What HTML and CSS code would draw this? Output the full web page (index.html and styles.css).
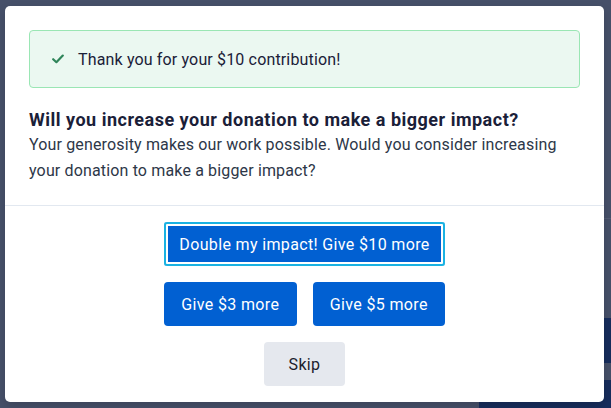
FILE: index.html
```html
<!DOCTYPE html>
<html>
	<head>
		<title>Increase your donation</title>
		<meta charset="UTF-8">
		<link rel="stylesheet" href="styles.css">
	</head>
	<body>
		<div class="page-behind">
			<div class="behind-line"></div>
			<div class="behind-block block-one"></div>
			<div class="behind-block block-two"></div>
			<div class="behind-block block-three"></div>
		</div>

		<div class="modal">
			<div class="modal-body">
				<div class="alert">
					<svg class="alert-icon" width="12" height="10" viewBox="0 0 12 10">
						<path d="M1.2 5.2 L4.4 8.2 L10.8 1.6" fill="none" stroke="#2f855a" stroke-width="2.2" stroke-linecap="round" stroke-linejoin="round"/>
					</svg>
					<span>Thank you for your $10 contribution!</span>
				</div>
				<h2 class="title">Will you increase your donation to make a bigger impact?</h2>
				<p class="text">Your generosity makes our work possible. Would you consider increasing your donation to make a bigger impact?</p>
			</div>
			<div class="modal-footer">
				<div class="choices">
					<button class="btn btn-primary btn-focus">Double my impact! Give $10 more</button>
					<div class="choices-row">
						<button class="btn btn-primary">Give $3 more</button>
						<button class="btn btn-primary">Give $5 more</button>
					</div>
					<button class="btn btn-skip">Skip</button>
				</div>
			</div>
		</div>
	</body>
</html>
```

FILE: styles.css
```css
html, body
	{
		margin: 0;
		height: 100%;
	}
body
	{
		background-color: #465069;
		font-family: Roboto, "Liberation Sans", sans-serif;
		color: #1a202c;
		letter-spacing: 0.15px;
		overflow: hidden;
		position: relative;
	}

/* page that lies under the overlay */
.behind-line
	{
		position: absolute;
		left: 560px;
		right: 0;
		top: 218px;
		height: 1px;
		background-color: #535c74;
	}
.behind-block
	{
		position: absolute;
		background-color: #172d5c;
	}
.block-one
	{
		left: 560px;
		right: 0;
		top: 318px;
		height: 45px;
	}
.block-two
	{
		left: 560px;
		right: 0;
		top: 380px;
		bottom: 0;
	}
.block-three
	{
		left: 479px;
		right: 0;
		top: 398px;
		bottom: 0;
	}

.modal
	{
		position: relative;
		width: 599px;
		margin: 6px 0 0 5px;
		background-color: #fff;
		border-radius: 5px;
		box-shadow: 0 4px 10px rgba(0, 0, 0, 0.15);
	}
.modal-body
	{
		padding: 24px 24px 21px;
		border-bottom: 1px solid #e2e8f0;
	}

.alert
	{
		display: flex;
		align-items: center;
		height: 56px;
		padding: 0 22px;
		background-color: #ebf8f1;
		border: 1px solid #9ae6b4;
		border-radius: 4px;
		font-size: 16px;
		color: #1a2038;
	}
.alert-icon
	{
		margin-right: 14px;
		flex-shrink: 0;
	}

.title
	{
		margin: 20px 0 0;
		font-size: 18px;
		line-height: 24px;
		font-weight: 700;
		letter-spacing: 0.5px;
		color: #1a2038;
	}
.text
	{
		margin: 0;
		font-size: 16px;
		line-height: 26px;
		color: #2d3748;
	}

.modal-footer
	{
		display: flex;
		justify-content: center;
		padding: 16px 0;
	}
.choices
	{
		display: flex;
		flex-direction: column;
		align-items: center;
		gap: 16px;
	}
.choices-row
	{
		display: grid;
		grid-template-columns: 1fr 1fr;
		gap: 16px;
		width: 100%;
	}

.btn
	{
		height: 44px;
		padding: 0 16px;
		border: 0;
		border-radius: 4px;
		font-family: inherit;
		font-size: 16px;
		letter-spacing: 0.35px;
		white-space: nowrap;
		cursor: pointer;
	}
.btn-primary
	{
		background-color: #0160d2;
		color: #fff;
	}
.btn-focus
	{
		width: 281px;
		padding: 0;
		border-radius: 3px;
		box-shadow: inset 0 0 0 2px #1ab2e2, inset 0 0 0 4px #fff;
	}
.btn-skip
	{
		width: 81px;
		padding: 0;
		background-color: #e5e8ee;
		color: #1a202c;
	}
```
